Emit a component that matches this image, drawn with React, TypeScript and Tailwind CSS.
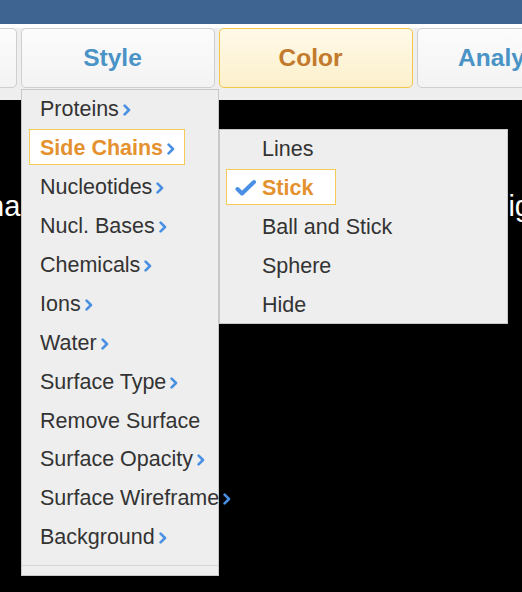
import React from "react";

const Chevron = () => (
  <svg width="8" height="12" viewBox="0 0 8 12" className="inline-block align-baseline ml-[4px]">
    <path d="M1.6 1.6 L6 6 L1.6 10.4" fill="none" stroke="#4a90e2" strokeWidth="2.6" strokeLinecap="round" strokeLinejoin="round" />
  </svg>
);

const Check = () => (
  <svg width="22" height="18" viewBox="0 0 22 18" className="absolute left-[8px] top-[9px]">
    <path d="M2.5 10 L7 14.5 L19 3" fill="none" stroke="#4a8fe6" strokeWidth="4" strokeLinecap="round" strokeLinejoin="round" />
  </svg>
);

type Item = { label: string; sub?: boolean; active?: boolean };

const mainItems: Item[] = [
  { label: "Proteins", sub: true },
  { label: "Side Chains", sub: true, active: true },
  { label: "Nucleotides", sub: true },
  { label: "Nucl. Bases", sub: true },
  { label: "Chemicals", sub: true },
  { label: "Ions", sub: true },
  { label: "Water", sub: true },
  { label: "Surface Type", sub: true },
  { label: "Remove Surface" },
  { label: "Surface Opacity", sub: true },
  { label: "Surface Wireframe", sub: true },
  { label: "Background", sub: true },
];

const subItems = ["Lines", "Stick", "Ball and Stick", "Sphere", "Hide"];

export default function App() {
  return (
    <div className="relative w-[522px] h-[592px] overflow-hidden bg-black font-['Liberation_Sans',Arial,sans-serif]">
      <div className="h-[24px] bg-[#3e6592]" />
      <div className="h-[4px] bg-white" />
      <div className="h-[72px] bg-[#eeeeee] overflow-hidden">
        <div className="flex gap-[4px] -ml-[177px] h-[60px]">
          {[
            { t: "View", c: "text-[#4a93c6]", act: false },
            { t: "Style", c: "text-[#4a93c6]", act: false },
            { t: "Color", c: "text-[#c27a2d]", act: true },
            { t: "Analysis", c: "text-[#4a93c6]", act: false },
          ].map((tab) => (
            <div
              key={tab.t}
              className={
                "w-[194px] shrink-0 h-[60px] pr-[11px] pt-[1px] rounded-[5px] border flex items-center justify-center text-[24.5px] font-bold " +
                tab.c +
                (tab.act
                  ? " border-[#f3c64c] bg-gradient-to-b from-[#fff9e8] to-[#fcf0cc]"
                  : " border-[#cfcfcf] bg-gradient-to-b from-[#fcfcfc] to-[#f3f3f3]")
              }
            >
              <span className="whitespace-nowrap">{tab.t}</span>
            </div>
          ))}
        </div>
      </div>
      <div className="pt-[92px] flex justify-between text-white text-[29px] leading-[29px]">
        <span className="-ml-[12px]">na</span>
        <span className="-mr-[9px]">ig</span>
      </div>

      <div className="absolute left-[21px] top-[89px] w-[198px] border border-[#c8c8c8] bg-[#eeeeee] text-[#333333] text-[21.5px]">
        <div className="-mt-px">
          {mainItems.map((it) => (
            <div key={it.label} className="h-[38.9px] flex items-center">
              <div
                className={
                  "ml-[7px] h-[36px] pl-[10px] pr-[9px] border whitespace-nowrap leading-[36px] " +
                  (it.active
                    ? "border-[#f4cb55] bg-white text-[#e4912f] font-bold"
                    : "border-transparent")
                }
              >
                {it.label}
                {it.sub && <Chevron />}
              </div>
            </div>
          ))}
        </div>
        <div className="mt-[9px] h-px bg-[#d6d6d6]" />
        <div className="h-[9px]" />
      </div>

      <div className="absolute left-[219px] top-[129px] w-[289px] border border-[#c8c8c8] bg-[#eeeeee] text-[#333333] text-[21.5px]">
        <div className="-mt-px">
          {subItems.map((s) => {
            const active = s === "Stick";
            return (
              <div key={s} className="h-[38.9px] flex items-center">
                <div
                  className={
                    "relative ml-[6px] h-[36px] pl-[35px] pr-[22px] border whitespace-nowrap leading-[36px] " +
                    (active
                      ? "border-[#f4cb55] bg-white text-[#e4912f] font-bold"
                      : "border-transparent")
                  }
                >
                  {active && <Check />}
                  {s}
                </div>
              </div>
            );
          })}
        </div>
      </div>
    </div>
  );
}
